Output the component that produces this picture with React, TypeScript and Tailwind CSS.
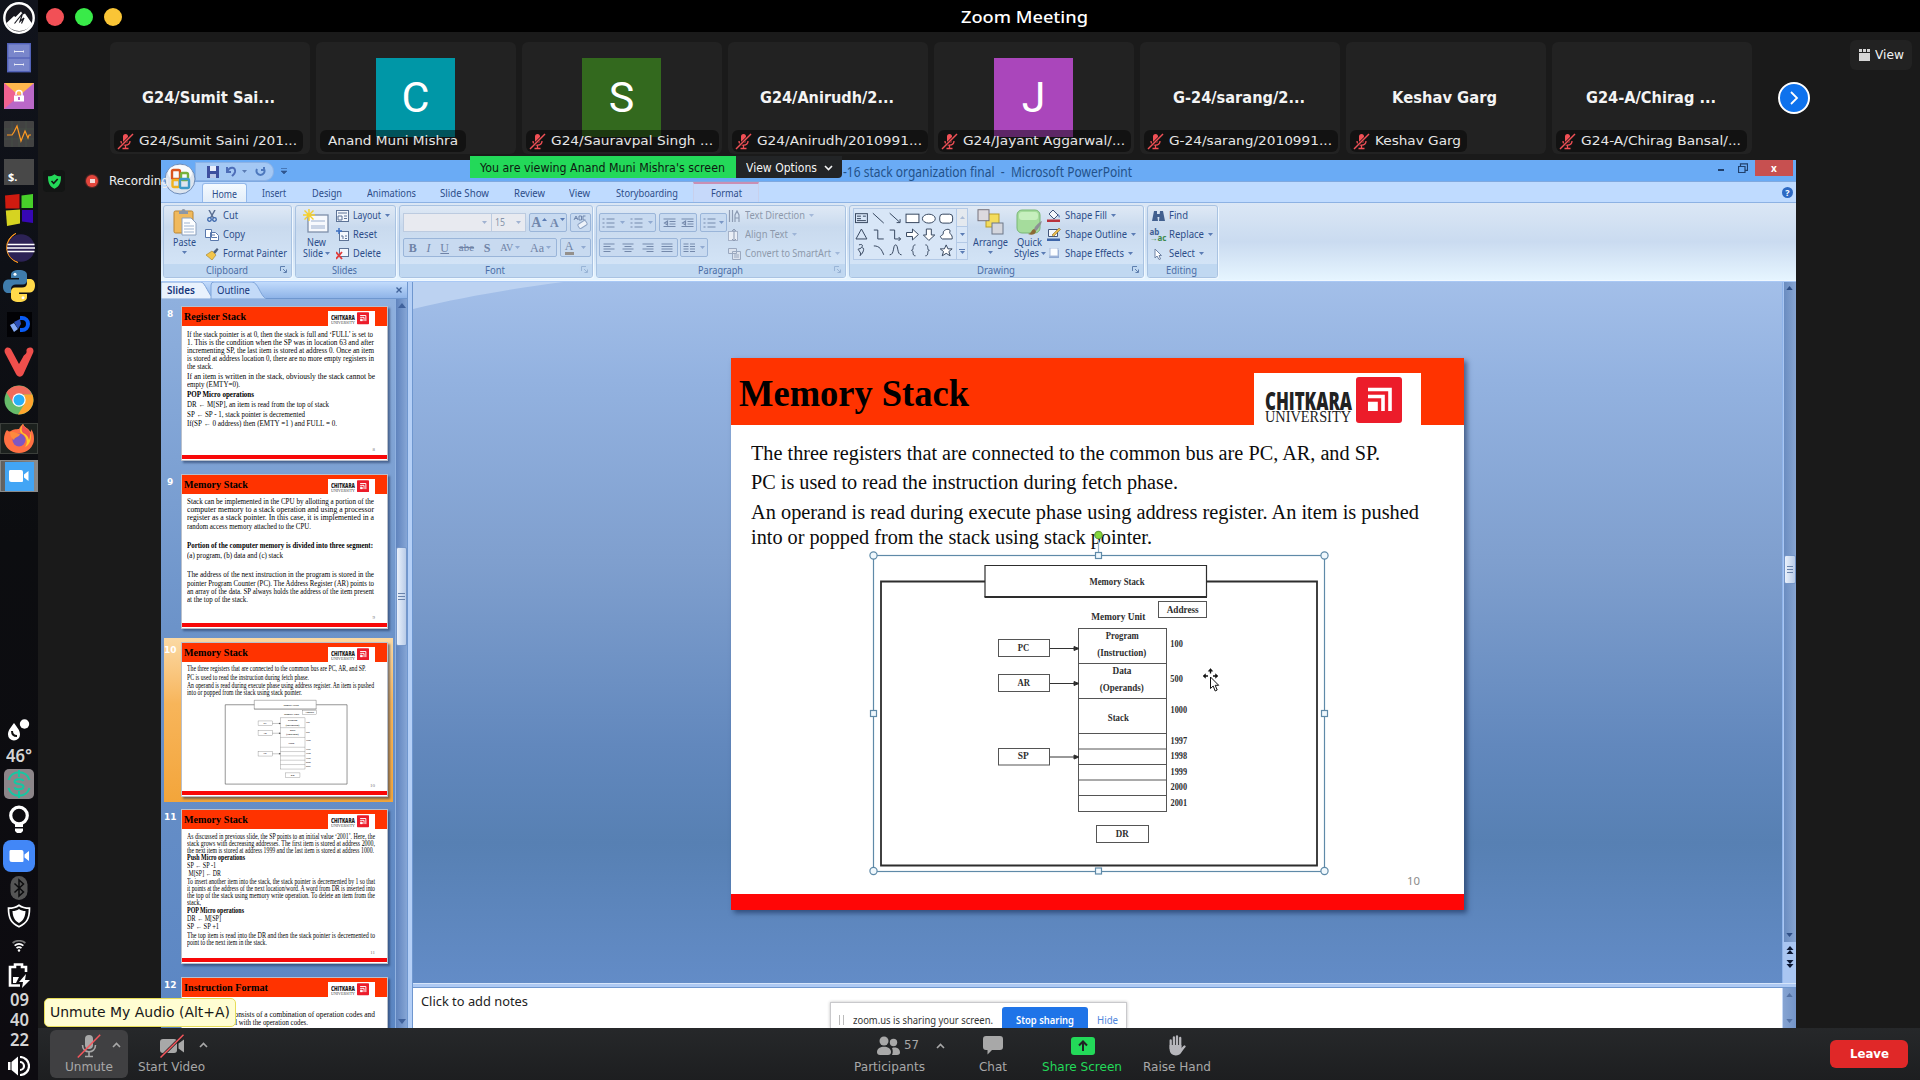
import React, { useLayoutEffect, useRef } from "react";

/* Text stretched to an exact pixel width. */
function Fit({ w, children, className = "" }: { w: number; children: React.ReactNode; className?: string }) {
  const ref = useRef<HTMLSpanElement>(null);
  useLayoutEffect(() => {
    const el = ref.current;
    if (!el) return;
    el.style.transform = "none";
    const natural = el.getBoundingClientRect().width;
    if (natural > 0) el.style.transform = `scaleX(${w / natural})`;
  }, [w, children]);
  return (
    <span className={`block shrink-0 whitespace-nowrap ${className}`} style={{ width: w }}>
      <span ref={ref} className="inline-block origin-left">{children}</span>
    </span>
  );
}

/* ---------- Dock ---------- */

function Cell({ h, children, className = "" }: { h: number; children: React.ReactNode; className?: string }) {
  return (
    <div className={`flex w-[38px] shrink-0 items-center justify-center ${className}`} style={{ height: h }}>
      {children}
    </div>
  );
}

function ZoomCam({ className }: { className: string }) {
  return (
    <svg viewBox="0 0 20 12" className={className}>
      <path d="M2 0h10a2 2 0 0 1 2 2v9a1 1 0 0 1-1 1H2.500a2.500 2.500 0 0 1-2.500-2.500V1.500A1.500 1.500 0 0 1 2 0z" fill="#fff" />
      <path d="M15 4.500 19.500 1v10L15 7.500z" fill="#fff" />
    </svg>
  );
}

function Dock() {
  return (
    <div className="flex h-[1080px] w-[38px] shrink-0 flex-col bg-linear-to-b from-[#10131c] via-[#0c0d10] via-50% to-[#0d0b10] font-['Noto_Sans',sans-serif]">
      <Cell h={39} className="pb-[3px]">
        <svg width="32" height="32" viewBox="0 0 32 32">
          <circle cx="16" cy="16" r="14.700" fill="#17171f" stroke="#fff" strokeWidth="2.400" />
          <path d="M3.500 21 11 14l1.500 1L18 9.500l2 3L22 11.500l7 10a14.500 14.500 0 0 1-25.500 0z" fill="#fff" />
          <path d="m11.500 21.500 8-10-2.500 8 4-3.500-2.500 5.500" stroke="#17171f" strokeWidth="1.200" fill="none" />
        </svg>
      </Cell>
      <Cell h={38}>
        <svg width="24" height="30" viewBox="0 0 24 30">
          <rect x=".7" y=".7" width="22.600" height="28" fill="#7986cb" stroke="#5262b8" strokeWidth="1.400" />
          <path d="M1 15h22" stroke="#4f5fb5" strokeWidth="1.200" />
          <path d="M7.500 7.500v2M16.500 7.500v2M7.500 8.500h9M7.500 20.500v2M16.500 20.500v2M7.500 21.500h9" stroke="#e8eaf6" fill="none" />
        </svg>
      </Cell>
      <Cell h={38}>
        <svg width="30" height="26" viewBox="0 0 30 26">
          <rect width="30" height="26" fill="#ba68c8" />
          <path d="M0 0h30L15 13z" fill="#ffb74d" />
          <path d="M0 0v26l15-13z" fill="#f06292" />
          <rect x="10" y="12.500" width="10" height="6" fill="#fff" />
          <path d="M12 12v-1.500a3 3 0 0 1 6 0V13" stroke="#fff" strokeWidth="1.500" fill="none" />
          <rect x="14" y="14" width="2" height="3" fill="#ba68c8" />
        </svg>
      </Cell>
      <Cell h={38}>
        <svg width="30" height="26" viewBox="0 0 30 26">
          <rect width="30" height="26" rx="1" fill="#424242" />
          <path d="M8 0v26M15 0v26M22 0v26M0 8h30M0 18h30" stroke="#4b5a4b" strokeWidth=".5" />
          <path d="M3 14h5l2-3 3-6 4 15 4-10 3 7 1-3h2" stroke="#ff9a22" strokeWidth="1.200" fill="none" />
        </svg>
      </Cell>
      <Cell h={38}>
        <div className="flex h-[26px] w-[30px] items-end bg-[#484848] pl-[4px] font-['Noto_Sans'] text-[11px] leading-[17px] font-bold text-white">$.</div>
      </Cell>
      <Cell h={38}>
        <svg width="29" height="32" viewBox="0 0 29 32">
          <path d="M0 1.500 14.500 0v14.500H.5z" fill="#cf1b10" />
          <path d="M16.500 1.500 28 0v14H16.500z" fill="#47cf2a" />
          <path d="M.8 16.500 15 15.500v14L2 32z" fill="#d6d321" />
          <path d="M17 16h11v13l-11-1.500z" fill="#3607b4" />
        </svg>
      </Cell>
      <Cell h={38}>
        <svg width="32" height="30" viewBox="0 0 32 30">
          <path d="M13 .3a15.500 15.500 0 0 0 2 29.200A16 16 0 0 1 13 .3z" fill="#f7941e" stroke="#f7941e" />
          <circle cx="18" cy="15" r="13.800" fill="#2c2255" />
          <path d="M4.500 11.500h27M4 15h28M4.500 18.500h27" stroke="#fff" strokeWidth="1.600" />
        </svg>
      </Cell>
      <Cell h={38}>
        <svg width="32" height="32" viewBox="0 0 32 32">
          <path d="M16 0c-5 0-8 1.500-8 5v3h8v1.500H5c-3 0-5 3-5 7s2 6.500 5 6.500h3v-4c0-3 2-4.500 5-4.500h7c2.500 0 4-1.800 4-4V5c0-3.500-3-5-8-5z" fill="#3f7cac" />
          <path d="M16 32c5 0 8-1.500 8-5v-3h-8v-1.500h11c3 0 5-3 5-7S30 9 27 9h-3v4c0 3-2 4.500-5 4.500h-7c-2.500 0-4 1.800-4 4V27c0 3.500 3 5 8 5z" fill="#ffd94a" />
          <circle cx="12" cy="4.300" r="1.500" fill="#fff" />
          <circle cx="20" cy="27.700" r="1.500" fill="#fff" />
        </svg>
      </Cell>
      <Cell h={38}>
        <svg width="25" height="25" viewBox="0 0 25 25">
          <rect width="25" height="25" fill="#020205" />
          <path d="M13 4h2a8 8 0 0 1 0 16h-2v-4h2a4 4 0 0 0 0-8h-2z" fill="#0a5cf5" />
          <path d="m3 13 4-2 4 6-4 3z" fill="#84a9f5" />
          <path d="m7 10 6-3 1 5-3 5z" fill="#2b4fb8" />
        </svg>
      </Cell>
      <Cell h={38}>
        <svg width="30" height="30" viewBox="0 0 30 30">
          <path d="M.8 2.500C2-.5 6 0 7.200 2.500L15 17l4-7c1.500-3 4-3 3.500-6C22 1 25 0 27 .5c2.500.7 3 3.500 2 5.500L19.500 27c-1.800 3.500-5.500 3.500-7.500 0L1 6C.5 5 .4 3.500.8 2.500z" fill="#ef4f4c" />
        </svg>
      </Cell>
      <Cell h={38}>
        <svg width="30" height="30" viewBox="0 0 30 30">
          <circle cx="15" cy="15" r="14.500" fill="#66bb6a" />
          <path d="M2.500 7.500A14.500 14.500 0 0 1 28 9.500H15L9 18z" fill="#ef6b5c" />
          <path d="M28.300 9.500A14.500 14.500 0 0 1 14 29.500L21 18l-1-8.500z" fill="#ffa52e" />
          <circle cx="15" cy="15" r="6.700" fill="#fff" />
          <circle cx="15" cy="15" r="5.500" fill="#29b0f6" />
        </svg>
      </Cell>
      <Cell h={38}>
        <div className="flex h-[31px] w-[38px] items-center justify-center border border-[#3b3f3b] bg-[#1c211e]">
          <svg width="30" height="29" viewBox="0 0 30 29">
            <path d="M3 6c1 1 2 1.500 3 1.500C9 5 15 5 15 5c2-4 3-4 4-5 1 4 6 4 7 8 2-1 1-3 1-3 3 4 3 8 3 10a15 14 0 0 1-30 0c0-3 1-7 3-9z" fill="#ff7043" />
            <path d="M19 0c1 4 6 4 7 9 2 5 0 12-5 14 4-5 1-12-4-14-2-3 0-6 2-9z" fill="#ffca28" />
            <path d="M19 0c1 4 6 4 7 9 0 3 0 5-1 7-1-4-3-6-6-7-2-2-2-5 0-9z" fill="#ef5350" />
            <circle cx="15" cy="16" r="6.500" fill="#7e57c2" />
            <path d="M6 8c4-1 6 2 10 2-1 4-5 2-6 6-3-2-4-5-4-8z" fill="#ff8a3c" />
          </svg>
        </div>
      </Cell>
      <Cell h={38}>
        <div className="flex h-[32px] w-[38px] items-center justify-center border border-[#8a8a8a] bg-linear-to-r from-[#606060] to-[#8a8a8a]">
          <div className="flex h-[29px] w-[29px] shrink-0 items-center justify-center bg-[#42a5f5]"><ZoomCam className="h-[12px] w-[20px]" /></div>
        </div>
      </Cell>
      <div className="grow" />
      <Cell h={29}>
        <svg width="24" height="22" viewBox="0 0 24 22">
          <path d="M7 4c3 4.500 6 7 6 11.500a6 6 0 0 1-12 0C1 11 4 8.500 7 4z" fill="#fff" />
          <path d="M5 12c0 3 2 5 5 5" stroke="#111" strokeWidth="2" fill="none" />
          <circle cx="17.500" cy="5" r="4.700" fill="#fff" />
        </svg>
      </Cell>
      <Cell h={23}><Fit w={26} className="text-[17px] leading-[23px] font-semibold text-[#d5d5d5]">46°</Fit></Cell>
      <Cell h={32} className="pt-[2px]">
        <svg width="30" height="30" viewBox="0 0 30 30">
          <rect width="30" height="30" rx="5" fill="#8c8589" />
          <g fill="none" stroke="#14c8a2" strokeWidth="2">
            <path d="M4.500 11a11 11 0 0 1 21 0M4.500 19a11 11 0 0 0 21 0M15 1v7M15 22v7" />
            <path d="M19.500 12c-1-2.500-9-2.500-9 .5 0 3.500 9 1.500 9 5s-8 3.500-9 .8" />
          </g>
        </svg>
      </Cell>
      <Cell h={40} className="pt-[2px]">
        <svg width="22" height="30" viewBox="0 0 22 30">
          <circle cx="11" cy="10.500" r="8.300" fill="none" stroke="#fff" strokeWidth="3.200" />
          <path d="M7 18h8v4H7zM7 23.500h8v2.500l-2 2H9l-2-2z" fill="#fff" />
        </svg>
      </Cell>
      <Cell h={32} className="pt-[1px]"><div className="flex h-[32px] w-[32px] items-center justify-center rounded-[8px] bg-[#4287f7]"><ZoomCam className="h-[12px] w-[21px]" /></div></Cell>
      <Cell h={32} className="pt-[2px]">
        <svg width="18" height="24" viewBox="0 0 18 24">
          <rect x=".5" width="17" height="24" rx="8.500" fill="#555" />
          <path d="m4.500 7.500 9 8.500-4.500 4V4l4.500 4-9 8.500" fill="none" stroke="#0c0c0e" strokeWidth="1.500" />
        </svg>
      </Cell>
      <Cell h={26}>
        <svg width="24" height="24" viewBox="0 0 24 24">
          <path d="M12 1.200c3 2.200 6.500 3 10.500 3 0 10-2.500 15-10.500 18.500C4 19 1.500 14 1.500 4.200c4 0 7.500-.8 10.500-3z" fill="#0c0c0e" stroke="#fff" strokeWidth="1.700" />
          <path d="M12 5c2 1.500 4 2 6.500 2-.3 6-2 9.500-6.500 12-4.500-2.500-6.200-6-6.500-12C8 7 10 6.500 12 5z" fill="#fff" />
        </svg>
      </Cell>
      <Cell h={32} className="pt-[2px]">
        <svg width="14" height="12" viewBox="0 0 14 12" fill="none" strokeWidth="1.700">
          <path d="M.6 3a10 10 0 0 1 12.800 0" stroke="#777" />
          <path d="M2.600 5.600a7 7 0 0 1 8.800 0M4.500 8.200a4 4 0 0 1 5 0" stroke="#fff" />
          <circle cx="7" cy="10.500" r="1.200" fill="#fff" />
        </svg>
      </Cell>
      <Cell h={29}>
        <svg width="22" height="25" viewBox="0 0 22 25">
          <path d="M18 9V4h-4V1.500H7V4H2v18.500h10" fill="none" stroke="#fff" strokeWidth="2.600" />
          <path d="M5 14h6l-3 6H5z" fill="#fff" />
          <path d="m18 11-7 8h4l-1 6 8-8h-5z" fill="#fff" />
        </svg>
      </Cell>
      {["09", "40", "22"].map((t) => (
        <Cell key={t} h={20}><Fit w={19} className="text-[17px] leading-[20px] font-semibold text-[#d5d5d5]">{t}</Fit></Cell>
      ))}
      <Cell h={30} className="pt-[2px]">
        <svg width="22" height="20" viewBox="0 0 22 20">
          <path d="M0 6h2.500v8H0zM3.500 6 10 .5v19L3.500 14z" fill="#fff" />
          <path d="M12 1a9 9 0 0 1 0 18M12 6a4 4 0 0 1 0 8" fill="none" stroke="#fff" strokeWidth="2.200" />
        </svg>
      </Cell>
    </div>
  );
}

/* ---------- Participant strip ---------- */

function RedMic() {
  return (
    <svg width="17" height="17" viewBox="0 0 17 17" className="shrink-0">
      <rect x="6" y="1" width="5" height="9" rx="2.500" fill="#f25056" />
      <path d="M4 8c0 5.500 9 5.500 9 0M8.500 12.500v3M5.500 15.500h6" stroke="#f25056" strokeWidth="1.300" fill="none" />
      <path d="M1 16 16 1" stroke="#141414" strokeWidth="3" />
      <path d="M1 16 16 1" stroke="#f25056" strokeWidth="1.500" />
    </svg>
  );
}

type Person = { label: string; lw: number; name?: string; nw?: number; letter?: string; color?: string; unmuted?: boolean };
const people: Person[] = [
  { label: "G24/Sumit Saini /201...", lw: 158, name: "G24/Sumit Sai...", nw: 133 },
  { label: "Anand Muni Mishra", lw: 130, letter: "C", color: "bg-[#0097a7]", unmuted: true },
  { label: "G24/Sauravpal Singh ...", lw: 162, letter: "S", color: "bg-[#33691e]" },
  { label: "G24/Anirudh/2010991...", lw: 165, name: "G24/Anirudh/2...", nw: 134 },
  { label: "G24/Jayant Aggarwal/...", lw: 162, letter: "J", color: "bg-[#aa46bb]" },
  { label: "G-24/sarang/2010991...", lw: 163, name: "G-24/sarang/2...", nw: 132 },
  { label: "Keshav Garg", lw: 86, name: "Keshav Garg", nw: 105 },
  { label: "G24-A/Chirag Bansal/...", lw: 160, name: "G24-A/Chirag ...", nw: 130 },
];

function Strip() {
  return (
    <div className="flex h-[128px] shrink-0 pt-[10px] pl-[72px] font-['DejaVu_Sans',sans-serif]">
      <div className="flex gap-[6px]">
        {people.map((p) => (
          <div key={p.label} className="relative flex h-[112px] w-[200px] items-center justify-center overflow-hidden rounded-[6px] bg-[#222222] pr-[3px] pb-px">
            {p.letter ? (
              <div className={`mb-px ml-[2px] flex h-[79px] w-[79px] items-center justify-center pt-[1px] font-['Roboto',sans-serif] text-[43px] text-white ${p.color}`}>{p.letter}</div>
            ) : (
              <Fit w={p.nw!} className="text-[15px] leading-[20px] font-bold text-[#f4f4f4]">{p.name}</Fit>
            )}
            <div className={`absolute bottom-[2px] left-[4px] flex h-[22px] items-center rounded-[6px] bg-black/45 ${p.unmuted ? "px-[8px]" : "gap-[5px] pr-[6px] pl-[3px]"}`}>
              {!p.unmuted && <RedMic />}
              <Fit w={p.lw} className="text-[13px] leading-[18px] text-[#e6e6e6]">{p.label}</Fit>
            </div>
          </div>
        ))}
      </div>
      <div className="mt-[40px] ml-[26px] flex h-[32px] w-[32px] items-center justify-center rounded-full border-[2.5px] border-white bg-[#0e72ed]">
        <svg width="10" height="14" viewBox="0 0 10 14"><path d="m2 1 6 6-6 6" fill="none" stroke="#fff" strokeWidth="1.800" /></svg>
      </div>
      <div className="-mt-[2px] ml-[40px] flex h-[30px] w-[62px] items-center justify-center gap-[5px] rounded-[6px] bg-[#222222]">
        <svg width="11" height="12" viewBox="0 0 11 12" fill="#d5d5d5"><path d="M0 0h3v3H0zM4 0h3v3H4zM8 0h3v3H8zM0 4h11v8H0z" /></svg>
        <Fit w={29} className="text-[12.500px] leading-[18px] text-[#f2f2f2]">View</Fit>
      </div>
    </div>
  );
}

/* ---------- Ribbon ---------- */

function Caret({ className = "" }: { className?: string }) {
  return <svg width="5" height="3" viewBox="0 0 5 3" className={`shrink-0 ${className}`}><path d="M0 0h5L2.500 3z" fill="#5b7cb4" /></svg>;
}

function Launcher({ faded = false }: { faded?: boolean }) {
  return (
    <svg width="7" height="7" viewBox="0 0 7 7" className={`absolute right-[4px] bottom-[4px] ${faded ? "opacity-40" : ""}`}>
      <path d="M.5 5V.5H5M3 3l3 3M6.500 3.500v3h-3" fill="none" stroke="#5e7fae" />
    </svg>
  );
}

function Group({ w, label, lw, children, launcher }: { w: number; label: string; lw: number; children: React.ReactNode; launcher?: "on" | "off" }) {
  return (
    <div className="relative flex h-[73px] shrink-0 flex-col overflow-hidden rounded-[3px] border border-[#a9c3e2] bg-linear-to-b from-[#dfe9f5] via-[#c9daee] via-30% to-[#d6e7f9] shadow-[1px_1px_0_#f0f8ff]" style={{ width: w }}>
      <div className="flex h-[58px] shrink-0">{children}</div>
      <div className="flex h-[14px] items-center justify-center bg-[#c0d8f1] pr-[2px]">
        <Fit w={lw} className="text-[10.500px] leading-[13px] text-[#4a6da6]">{label}</Fit>
      </div>
      {launcher && <Launcher faded={launcher === "off"} />}
    </div>
  );
}

function Cmd({ icon, w, text, caret, dim }: { icon: React.ReactNode; w: number; text: string; caret?: boolean; dim?: boolean }) {
  return (
    <div className="flex h-[19px] items-center">
      <div className="mr-[4px] flex w-[14px] shrink-0 justify-center">{icon}</div>
      <Fit w={w} className={`text-[10.500px] leading-[15px] ${dim ? "text-[#8d99ab]" : "text-[#2c4d89]"}`}>{text}</Fit>
      {caret && <Caret className={`ml-[4px] ${dim ? "opacity-40" : ""}`} />}
    </div>
  );
}

function Big({ icon, lines, caretBelow }: { icon: React.ReactNode; lines: [string, number][]; caretBelow?: boolean }) {
  return (
    <div className="flex flex-col items-center pt-[2px]">
      <div className="flex h-[28px] items-center">{icon}</div>
      {lines.map(([t, w], i) => (
        <div key={t} className="mt-px flex h-[10px] items-center gap-[2px]">
          <Fit w={w} className="text-[10.500px] leading-[11px] text-[#2c4d89]">{t}</Fit>
          {!caretBelow && i === lines.length - 1 && <Caret />}
        </div>
      ))}
      {caretBelow && <Caret className="mt-[4px]" />}
    </div>
  );
}

const btnBox = "flex h-[19px] items-center justify-around rounded-[2px] border border-[#9ab5d9] bg-[#c8daf0]";

function Lines({ kind }: { kind: "left" | "center" | "right" | "full" | "bul" | "ind" | "col" }) {
  const d = {
    left: "M0 1h11M0 3.500h7M0 6h11M0 8.500h7",
    center: "M0 1h11M2 3.500h7M0 6h11M2 8.500h7",
    right: "M0 1h11M4 3.500h7M0 6h11M4 8.500h7",
    full: "M0 1h11M0 3.500h11M0 6h11M0 8.500h11",
    bul: "M0 1h2M4 1h8M0 5h2M4 5h8M0 9h2M4 9h8",
    ind: "M0 1h12M6 3.500h6M6 6h6M0 8.500h12M4 3v4L1 5z",
    col: "M0 1h5M6.500 1h5M0 3.500h5M6.500 3.500h5M0 6h5M6.500 6h5M0 8.500h5M6.500 8.500h5",
  }[kind];
  return <svg width="13" height="10" viewBox="0 0 12 10"><path d={d} stroke="#7489ab" strokeWidth="1.200" fill="none" /></svg>;
}

function ShapeGallery() {
  return (
    <div className="mt-[2px] ml-[3px] flex h-[52px] w-[115px] border border-[#b3c9e6] bg-[#d8e6f7]">
      <svg width="103" height="50" viewBox="1 0 103 50" fill="none" stroke="#37475f" strokeWidth="1">
        <rect x="2.500" y="4.500" width="12" height="9" /><path d="M4 7h4M4 9.500h4M10 7h3M4 11.500h9" />
        <path d="m20 4 11 10M37 4l10 9M44 13.500h3.500V10" />
        <rect x="53.500" y="5" width="13" height="8.500" fill="#fff" />
        <ellipse cx="76.500" cy="9.500" rx="6.500" ry="4.500" fill="#fff" />
        <rect x="87.500" y="5" width="13" height="9" rx="3" fill="#fff" />
        <path d="m8.500 20 5.500 10H3zM21 21h4v9h6M37 21h5v9h6M46 28l2 2-2 2" />
        <path d="M54 23.500h6V20l6 5.500-6 5.500v-3.500h-6zM74 20h5v6h3.500L76.500 31.500 71 26h3z" fill="#fff" />
        <path d="M90 30c-5-4 2-3 1-6 0-4 7-5 7-2-2 3 3 3 2 8z" fill="#fff" />
        <path d="M6 36c6-2 3 4 0 4s4 4 1 7M9 39c4-1 0 8-2 7M21 37c6 0 8 4 10 9M37 46c5 0 3-10 6-10s1 10 6 10" />
        <path d="M63 36c-4 0-1 5-4 5.500 3 .5 0 5.500 4 5.500M73 36c4 0 1 5 4 5.500-3 .5 0 5.500-4 5.500" />
        <path d="m94 36 1.800 4H100l-3.300 2.700L98 47l-4-2.500L90 47l1.300-4.300L88 40h4.200z" fill="#fff" />
      </svg>
      <div className="flex w-[11px] flex-col border-l border-[#b3c9e6]">
        <div className="flex h-[17px] items-center justify-center bg-[#e4e9ef]"><Caret className="rotate-180 opacity-40" /></div>
        <div className="flex h-[17px] items-center justify-center border-y border-[#b3c9e6]"><Caret /></div>
        <div className="flex h-[16px] flex-col items-center justify-center gap-px"><div className="h-px w-[6px] bg-[#5b7cb4]" /><Caret /></div>
      </div>
    </div>
  );
}

const tabs: [string, number, number][] = [
  ["Insert", 24, 15], ["Design", 30, 26], ["Animations", 49, 25], ["Slide Show", 49, 24], ["Review", 31, 25],
  ["View", 21, 24], ["Storyboarding", 62, 26],
];

function Ribbon() {
  return (
    <>
      {/* Title bar */}
      <div className="relative flex h-[22px] shrink-0 border-b border-[#7fa9e0] bg-[#6aabf5]">
        <div className="mt-[2px] ml-[34px] flex h-[19px] w-[79px] items-center rounded-r-[9px] border border-[#8bb2e6] bg-[#a4c8f4] pl-[11px]">
          <svg width="12" height="12" viewBox="0 0 12 12"><path d="M0 0h12v12H0z" fill="#3d4f9f" /><path d="M3 0h6v5H3z" fill="#e8eefb" /><path d="M3 8h6v4H3z" fill="#b9c6e8" /></svg>
          <svg width="11" height="11" viewBox="0 0 11 11" className="ml-[7px]"><path d="M1 1v5h4M1.500 5C4 0 10 1 9 6c-.5 2-2 3-3 4" fill="none" stroke="#4d6db8" strokeWidth="2" /></svg>
          <Caret className="ml-[5px]" />
          <svg width="11" height="11" viewBox="0 0 11 11" className="ml-[8px]"><path d="M2 3a4 4 0 1 0 7 0M9 1v3H6" fill="none" stroke="#4d78bd" strokeWidth="2" /></svg>
        </div>
        <svg width="6" height="7" viewBox="0 0 6 7" className="mt-[8px] ml-[7px]"><path d="M0 .5h6M0 3h6L3 6z" fill="#2f568f" stroke="#2f568f" strokeWidth=".6" /></svg>
        <Fit w={289} className="mt-[3px] ml-[556px] text-[13.500px] leading-[18px] text-[#23528a]">-16 stack organization final&nbsp; - &nbsp;Microsoft PowerPoint</Fit>
        <div className="ml-auto flex h-[16px] items-center pr-[3px]">
          <div className="mt-[4px] mr-[14px] h-[2px] w-[6px] bg-[#20406c]" />
          <svg width="10" height="10" viewBox="0 0 10 10" className="mr-[7px]"><path d="M.5 3.500h6.500v6H.5zM2.500 3V.8h7v6.500H7.500" fill="none" stroke="#20406c" strokeWidth="1.200" /></svg>
          <div className="flex h-[16px] w-[38px] items-center justify-center bg-[#c75050] text-[10px] leading-none font-bold text-white">x</div>
        </div>
        {/* Office button */}
        <svg width="32" height="34" viewBox="0 0 32 34" className="absolute top-[2px] left-[3px] z-10">
          <circle cx="16" cy="17" r="15" fill="#dde5ef" stroke="#6f8db8" />
          <ellipse cx="16" cy="11" rx="12" ry="8" fill="#f8fafc" />
          <g fill="none" strokeWidth="2.400">
            <rect x="8" y="8" width="8" height="9" rx="1.500" stroke="#d9541e" /><rect x="17" y="11" width="7" height="7" rx="1.500" stroke="#78b23c" />
            <rect x="8.500" y="18" width="7" height="7" rx="1.500" stroke="#f0b21e" /><rect x="16" y="17" width="9" height="9" rx="1.500" stroke="#3c9ac8" />
          </g>
        </svg>
      </div>
      {/* Tabs */}
      <div className="flex h-[20px] shrink-0 items-end bg-[#bfdbff]">
        <div className="ml-[41px] flex h-[19px] w-[45px] items-center justify-center rounded-t-[3px] border border-b-0 border-[#95b9ea] bg-linear-to-b from-[#f4faff] to-[#e2edf9]">
          <Fit w={25} className="text-[11px] leading-[15px] text-[#2c4d89]">Home</Fit>
        </div>
        {tabs.map(([t, w, ml]) => (
          <div key={t} style={{ marginLeft: ml }}><Fit w={w} className="text-[11px] leading-[19px] text-[#2c4d89]">{t}</Fit></div>
        ))}
        <div className="ml-[15px] flex h-[20px] w-[66px] items-center justify-center border-x border-t-2 border-x-[#c8d0ec] border-t-[#c98fb4] bg-[#c6d9fa]">
          <Fit w={31} className="pb-[2px] text-[11px] leading-[15px] text-[#2c4d89]">Format</Fit>
        </div>
        <div className="mr-[3px] mb-[4px] ml-auto flex h-[11px] w-[11px] items-center justify-center rounded-full bg-[#2c69c4] text-[9px] font-bold text-white">?</div>
      </div>
      {/* Groups */}
      <div className="flex h-[78px] shrink-0 gap-[3px] border-t border-[#8db2e3] bg-linear-to-b from-[#dbe7f5] via-[#cadbf0] to-[#e6f5ff] pt-[2px] pl-[2px]">
        <Group w={129} label="Clipboard" lw={42} launcher="on">
          <div className="ml-[8px] w-[25px]">
            <Big caretBelow lines={[["Paste", 23]]} icon={
              <svg width="24" height="27" viewBox="0 0 24 27"><rect x="1" y="2" width="19" height="22" rx="1.500" fill="#f0b95c" stroke="#b98432" /><path d="M6 4V2h2.500a2 2 0 0 1 4 0H15v3H6z" fill="#8d97a5" /><path d="M9 9h9l5 5v12H9z" fill="#fdfeff" stroke="#8ba0bd" /><path d="M11 14h6M11 17h10M11 20h10M11 23h10" stroke="#9fb4d0" /></svg>} />
          </div>
          <div className="ml-[8px]">
            <Cmd w={15} text="Cut" icon={<svg width="10" height="12" viewBox="0 0 10 12"><path d="M2 0 6.500 8M8 0 3.500 8" stroke="#5b6f92" strokeWidth="1.500" /><circle cx="2.500" cy="9.500" r="1.800" fill="none" stroke="#3b66ac" strokeWidth="1.300" /><circle cx="7.500" cy="9.500" r="1.800" fill="none" stroke="#3b66ac" strokeWidth="1.300" /></svg>} />
            <Cmd w={22} text="Copy" icon={<svg width="14" height="12" viewBox="0 0 14 12"><path d="M.5.500h6v8h-6zM5.500 3.500h5l3 3v5h-8z" fill="#fff" stroke="#5877ab" /><path d="M7 6h3M7 8.500h5" stroke="#5877ab" /></svg>} />
            <Cmd w={64} text="Format Painter" icon={<svg width="14" height="12" viewBox="0 0 14 12"><path d="m8 4 4-4 1.500 1.500L10 6z" fill="#4d5f7d" /><path d="m1 7 6-4 4 4-4 5z" fill="#f2c54a" stroke="#a98a3a" strokeWidth=".7" /></svg>} />
          </div>
        </Group>
        <Group w={101} label="Slides" lw={25}>
          <div className="ml-[5px] w-[30px]">
            <Big lines={[["New", 19], ["Slide", 20]]} icon={
              <svg width="27" height="26" viewBox="0 0 27 26"><rect x="5" y="6" width="20" height="17" fill="#f7f9fd" stroke="#7e8fa9" strokeWidth="1.300" /><path d="M8 11h14v2H8zM8 16h14v4H8z" fill="#c9d4e6" /><path d="M6 0v12M0 6h12M1.500 1.500l9 9M10.500 1.500l-9 9" stroke="#f5cf2c" strokeWidth="1.400" /></svg>} />
          </div>
          <div className="ml-[4px]">
            <Cmd w={28} text="Layout" caret icon={<svg width="13" height="12" viewBox="0 0 13 12"><rect x=".5" y=".5" width="12" height="11" fill="#f3f7fd" stroke="#5d7396" /><path d="M2 3h9M2 6h4v4H2zM8 6h3M8 8.500h3" stroke="#5d7396" fill="none" /></svg>} />
            <Cmd w={24} text="Reset" icon={<svg width="13" height="13" viewBox="0 0 13 13"><rect x="3.500" y="3.500" width="9" height="9" fill="#f3f7fd" stroke="#5d7396" /><path d="M5 8h2v3M9 8h2M9 10.500h2" stroke="#5d7396" fill="none" /><path d="M0 3h6M3 0v6" stroke="#3d6fc1" strokeWidth="1.500" /></svg>} />
            <Cmd w={28} text="Delete" icon={<svg width="13" height="12" viewBox="0 0 13 12"><rect x="3.500" y=".5" width="9" height="8" fill="#f3f7fd" stroke="#5d7396" /><path d="m0 4 6 7M6 4l-6 7" stroke="#e03a3a" strokeWidth="1.800" /></svg>} />
          </div>
        </Group>
        <Group w={194} label="Font" lw={20} launcher="off">
          <div className="flex flex-col gap-[6px] pt-[7px] pl-[3px]">
            <div className="flex h-[19px] items-center">
              <div className="flex h-[19px] w-[89px] items-center justify-end border border-[#bccbe0] bg-[#e8eaf0] pr-[4px]"><Caret className="opacity-50" /></div>
              <div className="flex h-[19px] w-[34px] items-center justify-between border border-l-0 border-[#bccbe0] bg-[#e8eaf0] pr-[4px] pl-[3px]"><Fit w={10} className="text-[10.500px] text-[#8795aa]">15</Fit><Caret className="opacity-50" /></div>
              <div className={`ml-[3px] w-[38px] font-['Liberation_Serif'] font-bold text-[#7187ac] ${btnBox}`}>
                <span className="flex items-start gap-px text-[14px] leading-[16px]">A<Caret className="mt-[3px] rotate-180" /></span>
                <span className="flex items-start gap-px text-[12px] leading-[16px]">A<Caret className="mt-[3px]" /></span>
              </div>
              <div className={`ml-[3px] w-[21px] ${btnBox}`}><svg width="15" height="15" viewBox="0 0 15 15"><path d="M1 5 3 1l2 4M1.800 3.500h2.500M6 1h2.500v4H6zM12.500 1H10v4h2.500" stroke="#7187ac" fill="none" /><rect x="5" y="7" width="9" height="5" rx="1.500" transform="rotate(-32 9.500 9.500)" fill="#eef3fa" stroke="#8fa4c4" /></svg></div>
            </div>
            <div className="flex">
              <div className={`w-[154px] font-['Liberation_Serif'] text-[12px] text-[#6f83a6] ${btnBox}`}>
                <span className="font-bold">B</span><span className="italic">I</span><span className="underline">U</span><span className="text-[11px] line-through">abe</span><span className="font-bold">S</span>
                <span className="flex items-center gap-[2px] text-[10px]">AV<Caret className="opacity-50" /></span><span className="flex items-center gap-[2px]">Aa<Caret className="opacity-50" /></span>
              </div>
              <div className={`ml-[3px] w-[31px] ${btnBox}`}><span className="border-b-[3px] border-[#94908c] font-['Liberation_Serif'] text-[12px] leading-[11px] text-[#6f83a6]">A</span><Caret className="opacity-50" /></div>
            </div>
          </div>
        </Group>
        <Group w={250} label="Paragraph" lw={45} launcher="off">
          <div className="flex w-[130px] flex-col gap-[6px] pt-[7px] pl-[2px]">
            <div className="flex gap-[3px]">
              <div className={`w-[57px] ${btnBox}`}><Lines kind="bul" /><Caret className="opacity-50" /><Lines kind="bul" /><Caret className="opacity-50" /></div>
              <div className={`w-[38px] ${btnBox}`}><Lines kind="ind" /><Lines kind="ind" /></div>
              <div className={`w-[27px] ${btnBox}`}><Lines kind="bul" /><Caret className="opacity-70" /></div>
            </div>
            <div className="flex gap-[2px]">
              <div className={`w-[79px] ${btnBox}`}><Lines kind="left" /><Lines kind="center" /><Lines kind="right" /><Lines kind="full" /></div>
              <div className={`w-[28px] ${btnBox}`}><Lines kind="col" /><Caret className="opacity-50" /></div>
            </div>
          </div>
          <div>
            <Cmd dim caret w={60} text="Text Direction" icon={<svg width="12" height="12" viewBox="0 0 12 12"><path d="M1.500 0v12M4.500 0v12M7 12V5l2-4 2 4v7M7 8h4" stroke="#8d9bb3" fill="none" strokeWidth="1.200" /></svg>} />
            <Cmd dim caret w={43} text="Align Text" icon={<svg width="12" height="12" viewBox="0 0 12 12"><rect x=".5" y="2.500" width="9" height="9" fill="#e9eef6" stroke="#a5b2c8" /><path d="M6 0v12M4 2l2-2 2 2M4 10l2 2 2-2" stroke="#8d9bb3" fill="none" /></svg>} />
            <Cmd dim caret w={86} text="Convert to SmartArt" icon={<svg width="13" height="12" viewBox="0 0 13 12"><path d="M.5.500h8v5h-8zM4.500 3.500h8v8h-8z" fill="#dce3ee" stroke="#9aa8bf" /><path d="M6 7h5M6 9h5" stroke="#9aa8bf" /></svg>} />
          </div>
        </Group>
        <Group w={295} label="Drawing" lw={38} launcher="on">
          <ShapeGallery />
          <div className="ml-[4px] w-[37px]">
            <Big caretBelow lines={[["Arrange", 35]]} icon={<svg width="27" height="26" viewBox="0 0 27 26"><rect x="9" y="5" width="13" height="13" fill="#f3dc5c" stroke="#b99d2a" /><rect x="1" y=".7" width="11" height="11" fill="#dcd9de" stroke="#77737c" /><rect x="15" y="14" width="11" height="11" fill="#d4d6dd" stroke="#6d7787" /></svg>} />
          </div>
          <div className="ml-[3px] w-[35px]">
            <Big lines={[["Quick", 25], ["Styles", 25]]} icon={<svg width="27" height="27" viewBox="0 0 27 27"><rect x="1" y="1" width="23" height="23" rx="5" fill="#a5dc9c" stroke="#79b775" /><rect x="3" y="3" width="19" height="8" rx="3" fill="#c6efbe" /><path d="M26 12c-4 2-8 6-8 9l2 1c2-2 5-6 6-10z" fill="#8d8f94" /><path d="M18 20c-3 1-2 4-6 5 4 2 8 0 8-3z" fill="#8c6a35" /></svg>} />
          </div>
          <div>
            <Cmd caret w={42} text="Shape Fill" icon={<svg width="14" height="13" viewBox="0 0 14 13"><path d="m2 5 4-4 5 5-4 4z" fill="#f4f7fc" stroke="#42557a" /><path d="M11 5c2 1 2 3 1 4z" fill="#3b66ac" /><path d="M0 10.500h13V13H0z" fill="#b8323d" /></svg>} />
            <Cmd caret w={62} text="Shape Outline" icon={<svg width="14" height="13" viewBox="0 0 14 13"><path d="M1.500 1.500h9v7h-9z" fill="#f4f7fc" stroke="#42557a" /><path d="m5 7 7-7 1.500 1.500-7 7z" fill="#e6b94d" stroke="#7a5d1c" strokeWidth=".5" /><path d="M0 10.500h13V13H0z" fill="#3c64a8" /></svg>} />
            <Cmd caret w={59} text="Shape Effects" icon={<svg width="14" height="12" viewBox="0 0 14 12"><path d="M4 2h8v8H2z" fill="#8fa9d2" /><path d="M3 0h8v8H3z" fill="#fbfdff" stroke="#a9bcdb" /></svg>} />
          </div>
        </Group>
        <Group w={71} label="Editing" lw={31}>
          <div className="ml-[3px]">
            <Cmd w={19} text="Find" icon={<svg width="13" height="12" viewBox="0 0 13 12"><path d="M2 1h3v3l1 7H0zM8 1h3l2 10H7zM5 4h3v3H5z" fill="#42608f" /></svg>} />
            <Cmd caret w={35} text="Replace" icon={<span className="text-[8px] leading-[6px] font-bold text-[#3f5f93]">ab<br /><span className="text-[#3c8a4c]">→ac</span></span>} />
            <Cmd caret w={26} text="Select" icon={<svg width="8" height="12" viewBox="0 0 8 12"><path d="M1 1v9l2-2 2 3.500L6.500 11 5 7.500h2.500z" fill="#fff" stroke="#7084a5" /></svg>} />
          </div>
        </Group>
      </div>
    </>
  );
}

/* ---------- Slides ---------- */

function Diagram({ className }: { className: string }) {
  const t = (s: string, x: number, y: number, w: number) => (
    <text key={s + y} x={x - w / 2} y={y + 3.200} textLength={w} lengthAdjust="spacingAndGlyphs">{s}</text>
  );
  const arrow = (y: number) => <path key={y} d={`M1050 ${y}h26M1074 ${y - 2}l5 2-5 2z`} fill="#222" stroke="#333" />;
  return (
    <svg viewBox="873 555 451 316" className={className}>
      <g fill="none" stroke="#2d2d2d">
        <path d="M985 581.500H881v284h436v-284h-110" strokeWidth="1.800" />
        <path d="M985 597V565.500h221.500V597" strokeWidth="1.200" />
        <path d="M984.500 597h222.500" strokeWidth="2" />
        <g strokeWidth="1" stroke="#555">
          <rect x="1158.500" y="601.500" width="48" height="16" />
          <rect x="1078.500" y="628.500" width="88" height="183" />
          <path d="M1078.500 663.500h88M1078.500 698.500h88M1078.500 733.500h88M1078.500 749h88M1078.500 764.500h88M1078.500 780h88M1078.500 795.500h88" />
          <rect x="998.500" y="639.500" width="51" height="17" /><rect x="998.500" y="674.500" width="51" height="17" /><rect x="998.500" y="748.500" width="51" height="16.500" />
          <rect x="1096.500" y="825.500" width="52" height="17" />
        </g>
      </g>
      {[648.5, 683.5, 757].map(arrow)}
      <g fontFamily="Liberation Serif, serif" fontWeight="bold" fontSize="9.500" fill="#2e2e2e">
        {t("Memory Stack", 1117, 581.5, 55)}
        {t("Address", 1182.7, 609.5, 32)}
        {t("Memory Unit", 1118.3, 616.5, 54)}
        {t("Program", 1122.3, 636, 33)}
        {t("(Instruction)", 1121.7, 652.7, 49)}
        {t("Data", 1122, 671, 19)}
        {t("(Operands)", 1121.7, 687.5, 44)}
        {t("Stack", 1118.3, 717.3, 21)}
        {t("PC", 1023.5, 647.5, 11.500)}
        {t("AR", 1023.7, 682.5, 12.500)}
        {t("SP", 1023.3, 756, 11)}
        {t("DR", 1122.3, 833.5, 13)}
        {t("100", 1176.6, 643.5, 12.500)}
        {t("500", 1176.6, 678.3, 12.500)}
        {t("1000", 1178.8, 709.5, 16.500)}
        {t("1997", 1178.8, 740.5, 16.500)}
        {t("1998", 1178.8, 756, 16.500)}
        {t("1999", 1178.8, 771.3, 16.500)}
        {t("2000", 1178.8, 787, 16.500)}
        {t("2001", 1178.8, 802.5, 16.500)}
      </g>
    </svg>
  );
}

function LogoMark({ className }: { className: string }) {
  return (
    <svg viewBox="0 0 46 46" className={className}>
      <rect width="46" height="46" rx="3" fill="#ec1c2a" />
      <path d="M12 12.500h22V34M12 19.500h15V34M12 26.500h8V34" fill="none" stroke="#fff" strokeWidth="3.600" />
      <path d="M12 27h8v7h-8z" fill="#fff" />
    </svg>
  );
}

type L = [h: number, w: number, text: string, bold?: boolean];

function Thumb({ n, title, tw, top, lines, page, selected, diagram }: { n: number; title: string; tw: number; top: number; lines: L[]; page?: string; selected?: boolean; diagram?: boolean }) {
  return (
    <div className={`ml-[3px] flex h-[167.750px] w-[229px] shrink-0 ${selected ? "bg-linear-to-b from-[#fbd9a3] via-[#f7b55a] via-40% to-[#f3a53a] bg-[length:100%_164px] bg-no-repeat" : ""}`}>
      <div className="w-[17px] shrink-0 pt-[5px] font-['DejaVu_Sans',sans-serif] text-[9px] leading-[15px] font-bold text-white">
        <span className={n < 10 ? "ml-[3px]" : ""}>{n}</span>
      </div>
      <div className="mt-[4px] flex h-[155px] w-[207px] flex-col overflow-hidden border border-[#b9c0cc] bg-white shadow-[2px_2px_2px_rgba(30,50,90,.55)]">
        <div className="flex h-[19px] shrink-0 justify-between bg-[#ff3300] pr-[12px] pl-[2px]">
          <Fit w={tw} className="font-['Liberation_Serif',serif] text-[10.500px] leading-[20px] font-bold text-black">{title}</Fit>
          <div className="mt-[4px] flex h-[15px] w-[47px] items-start bg-white pl-[3px]">
            <div className="mt-[3px] mr-[2px]">
              <Fit w={24} className="h-[6px] font-['Open_Sans',sans-serif] text-[7px] leading-[7px] font-extrabold text-[#222]">CHITKARA</Fit>
              <Fit w={24} className="h-[5px] font-['Liberation_Serif',serif] text-[5px] leading-[6px] text-[#444]">UNIVERSITY</Fit>
            </div>
            <LogoMark className="mt-px h-[12.500px] w-[12px]" />
          </div>
        </div>
        <div className="relative grow font-['Liberation_Serif',serif] text-[7.200px] text-black">
          <div className="pl-[5px]" style={{ paddingTop: top }}>
            {lines.map(([h, w, text, bold]) => (
              <div key={text} className="flex items-end" style={{ height: h }}>
                <Fit w={w} className={`h-[8px] leading-[8px] ${bold ? "font-bold" : ""}`}>{text}</Fit>
              </div>
            ))}
          </div>
          {diagram && <Diagram className="absolute top-[35px] left-[41px] h-[89px] w-[126px]" />}
          <span className="absolute right-[12px] bottom-[2px] text-[5px] leading-[6px] text-[#777]">{page}</span>
        </div>
        <div className="h-[4px] shrink-0 bg-[#f80808]" />
        <div className="h-px shrink-0 bg-white" />
      </div>
    </div>
  );
}

function SlidePane() {
  return (
    <div className="flex h-[746px] w-[246px] shrink-0 flex-col overflow-hidden">
      <div className="flex h-[17px] shrink-0 items-center border-b border-[#6f97cf] bg-linear-to-b from-[#c2dbfb] to-[#8fb4e8]">
        <svg width="108" height="17" viewBox="0 0 108 17" className="absolute">
          <path d="M0 0h40c4 0 8 14 13 17H0z" fill="#e9f2fd" stroke="#7ea4d9" />
          <path d="M50 17V3q0-3 3-3h38c6 0 8 13 14 17z" fill="#c3daf8" stroke="#7ea4d9" />
        </svg>
        <Fit w={28} className="relative ml-[6px] pb-px text-[11px] leading-[15px] font-semibold text-[#15357a]">Slides</Fit>
        <Fit w={33} className="relative ml-[22px] pb-px text-[11px] leading-[15px] text-[#15357a]">Outline</Fit>
        <svg width="6" height="6" viewBox="0 0 6 6" className="mr-[5px] ml-auto"><path d="m.5.500 5 5M5.500.500l-5 5" stroke="#41639a" strokeWidth="1.400" /></svg>
      </div>
      <div className="flex min-h-0 grow">
        <div className="flex w-[234px] flex-col overflow-hidden bg-linear-to-b from-[#8fb0de] via-[#6c93c9] via-45% to-[#5b86c3] pt-[3px]">
          <Thumb n={8} title="Register Stack" tw={62} top={4.500} page="8" lines={[
            [8, 186, "If the stack pointer is at 0, then the stack is full and ‘FULL’ is set to"], [8, 187, "1. This is the condition when the SP was in location 63 and after"],
            [8, 187, "incrementing SP, the last item is stored at address 0. Once an item"], [8, 187, "is stored at address location 0, there are no more empty registers in"],
            [8.5, 26, "the stack."], [10, 188, "If an item is written in the stack, obviously the stack cannot be"], [8, 53, "empty (EMTY=0)."],
            [10, 67, "POP Micro operations", true], [9.5, 142, "DR ← M[SP], an item is read from the top of stack"], [10, 118, "SP ← SP - 1, stack pointer is decremented"], [9.5, 150, "If(SP ← 0 address) then (EMTY =1 ) and FULL = 0."],
          ]} />
          <Thumb n={9} title="Memory Stack" tw={64} top={4.500} page="9" lines={[
            [8, 187, "Stack can be implemented in the CPU by allotting a portion of the"], [8, 187, "computer memory to a stack operation and using a processor"],
            [8, 187, "register as a stack pointer. In this case, it is implemented in a"], [8.5, 124, "random access memory attached to the CPU."],
            [19.5, 186, "Portion of the computer memory is divided into three segment:", true], [9.5, 96, "(a) program, (b) data and (c) stack"],
            [19.5, 187, "The address of the next instruction in the program is stored in the"], [8.5, 187, "pointer Program Counter (PC). The Address Register (AR) points to"],
            [8, 187, "an array of the data. SP always holds the address of the item present"], [8.5, 61, "at the top of the stack."],
          ]} />
          <Thumb n={10} title="Memory Stack" tw={64} top={3.500} page="10" selected diagram lines={[
            [8, 179, "The three registers that are connected to the common bus are PC, AR, and SP."], [9, 122, "PC is used to read the instruction during fetch phase."],
            [8, 187, "An operand is read during execute phase using address register. An item is pushed"], [7, 115, "into or popped from the stack using stack pointer."],
          ]} />
          <Thumb n={11} title="Memory Stack" tw={64} top={4.500} page="11" lines={[
            [7, 188, "As discussed in previous slide, the SP points to an initial value ‘2001’. Here, the"], [7, 188, "stack grows with decreasing addresses. The first item is stored at address 2000,"], [7, 187, "the next item is stored at address 1999 and the last item is stored at address 1000."],
            [7, 58, "Push Micro operations", true], [8, 29, "SP ← SP -1"], [8.5, 34, "\u00a0M[SP] ← DR"], [8, 188, "To insert another item into the stack, the stack pointer is decremented by 1 so that"],
            [7, 188, "it points at the address of the next location/word. A word from DR is inserted into"], [7, 188, "the top of the stack using memory write operation. To delete an item from the"], [7, 14, "stack,"],
            [8, 57, "POP Micro operations", true], [8, 34, "DR ← M[SP]"], [8, 32, "SP ← SP +1"], [9, 188, "The top item is read into the DR and then the stack pointer is decremented to"], [7, 80, "point to the next item in the stack."],
          ]} />
          <Thumb n={12} title="Instruction Format" tw={84} top={13.500} lines={[
            [8, 188, "An instruction consists of a combination of operation codes and"], [8, 121, "operands that deal with the operation codes."],
          ]} />
        </div>
        <div className="flex w-[12px] flex-col items-center border-l border-[#8fb1e0] bg-linear-to-r from-[#5f83bd] to-[#86a6d6]">
          <svg width="8" height="5" viewBox="0 0 8 5" className="mt-[4px]"><path d="m4 0 4 5H0z" fill="#40629c" /></svg>
          <div className="mt-[239px] flex h-[99px] w-[11px] flex-col items-center justify-center gap-[2px] rounded-[2px] border border-[#7596c8] bg-linear-to-r from-[#eaf1fb] to-[#b9cce8]">
            <div className="h-px w-[7px] bg-[#6882ab]" /><div className="h-px w-[7px] bg-[#6882ab]" /><div className="h-px w-[7px] bg-[#6882ab]" />
          </div>
          <svg width="8" height="5" viewBox="0 0 8 5" className="mt-auto mb-[4px]"><path d="m4 5 4-5H0z" fill="#40629c" /></svg>
        </div>
      </div>
    </div>
  );
}

function Selection() {
  return (
    <svg width="467" height="352" viewBox="865 527 467 352" className="absolute top-[169px] left-[133.500px]">
      <g fill="none" stroke="#5f8aa8" strokeWidth="1.200">
        <rect x="873.500" y="555.500" width="451" height="316" />
        <path d="M1098.500 540v12" stroke="#8fb0c8" />
      </g>
      <g fill="#f0f8fd" stroke="#5f8aa8" strokeWidth="1.200">
        <circle cx="873.500" cy="555.500" r="3.600" /><circle cx="1324.500" cy="555.500" r="3.600" /><circle cx="873.500" cy="871" r="3.600" /><circle cx="1324.500" cy="871" r="3.600" />
        <rect x="1095.500" y="552.500" width="6" height="6" /><rect x="1095.500" y="868" width="6" height="6" /><rect x="870.500" y="710.500" width="6" height="6" /><rect x="1321.500" y="710.500" width="6" height="6" />
        <circle cx="1098.500" cy="535" r="3.700" fill="#86d93a" stroke="#6aa13e" />
      </g>
      <g stroke="#111" strokeWidth="1.300" fill="#111">
        <path d="M1204 676h4M1213 676h4M1210.500 669.500v4" />
        <path d="m1203 676 2.500-2.200v4.400zM1218 676l-2.500-2.200v4.400zM1210.500 668.500l2.200 2.700h-4.400z" strokeWidth=".5" />
        <path d="M1210.500 677v11.500l2.700-2.500 2 5 2-1-2-4.700h3.500z" fill="#fff" strokeWidth="1" />
      </g>
    </svg>
  );
}

function Workspace() {
  return (
    <div className="flex h-[746px] grow flex-col">
      <div className="flex h-[701px]">
        <div className="relative w-[1369px] bg-[linear-gradient(180deg,#a3bfe9_0%,#93b2e0_14%,#7f9fce_40%,#6288bd_66%,#5780b3_80%,#638cc7_100%)] pt-[76px] pl-[318px]">
          <svg width="160" height="30" viewBox="0 0 160 30" className="absolute top-0 left-0"><path d="M0 0h150C105 6 55 14 0 27z" fill="#bcd2f1" /></svg>
          <div className="relative flex h-[552px] w-[733px] flex-col bg-white shadow-[3px_3px_5px_rgba(20,40,80,.6)]">
            <div className="flex h-[67px] shrink-0 justify-between bg-[#ff3300] pr-[43px] pl-[8px]">
              <Fit w={230} className="font-['Liberation_Serif',serif] text-[37px] leading-[71px] font-bold text-black">Memory Stack</Fit>
              <div className="mt-[15px] flex h-[52px] w-[167px] bg-white pl-[11px]">
                <div className="mt-[14px] mr-[4px]">
                  <Fit w={87} className="h-[23px] font-['Open_Sans',sans-serif] text-[24px] leading-[27px] font-extrabold text-[#222]">CHITKARA</Fit>
                  <Fit w={86} className="h-[12px] font-['Liberation_Serif',serif] text-[16px] leading-[14px] text-[#222]">UNIVERSITY</Fit>
                </div>
                <LogoMark className="mt-[4px] h-[46px] w-[46px]" />
              </div>
            </div>
            <div className="pt-[14px] pl-[20px] font-['Liberation_Serif',serif] text-[20px] text-[#0c0c0c]">
              <Fit w={629} className="h-[29px] leading-[29px]">The three registers that are connected to the common bus are PC, AR, and SP.</Fit>
              <Fit w={427} className="h-[29.500px] leading-[29px]">PC is used to read the instruction during fetch phase.</Fit>
              <Fit w={668} className="h-[25px] leading-[29px]">An operand is read during execute phase using address register. An item is pushed</Fit>
              <Fit w={401} className="h-[29px] leading-[29px]">into or popped from the stack using stack pointer.</Fit>
            </div>
            <Diagram className="mt-[3px] ml-[142px] h-[316px] w-[451px] shrink-0" />
            <Fit w={13} className="mt-[1px] ml-[676px] text-[11px] leading-[17px] text-[#8b8b8b]">10</Fit>
            <div className="mt-auto h-[16px] shrink-0 bg-[#ff0606]" />
            <Selection />
          </div>
        </div>
        <div className="flex w-[14px] flex-col items-center border-l border-[#8fb4ea] bg-[#a9c6f2]">
          <div className="flex h-[660px] w-[12px] flex-col items-center bg-linear-to-r from-[#6a8cc0] to-[#87a5d2]">
            <svg width="7" height="4" viewBox="0 0 8 5" className="mt-[4px]"><path d="m4 0 4 5H0z" fill="#2f4f86" /></svg>
            <div className="mt-[265px] flex h-[29px] w-[12px] flex-col items-center justify-center gap-[2px] rounded-[2px] border border-[#7596c8] bg-linear-to-r from-[#eaf1fb] to-[#b9cce8]">
              <div className="h-px w-[6px] bg-[#6882ab]" /><div className="h-px w-[6px] bg-[#6882ab]" /><div className="h-px w-[6px] bg-[#6882ab]" />
            </div>
            <svg width="7" height="4" viewBox="0 0 8 5" className="mt-auto mb-[5px]"><path d="m4 5 4-5H0z" fill="#2f4f86" /></svg>
          </div>
          <svg width="8" height="22" viewBox="0 0 8 22" className="mt-[4px]" fill="#0b1733"><path d="m4 0 3.500 4h-7zM4 4l3.500 4h-7zM4 18l3.500-4h-7zM4 22l3.500-4h-7z" /></svg>
        </div>
      </div>
      <div className="h-[5px] shrink-0 border-t border-b border-t-[#d5e5fb] border-b-[#6f97cf] bg-[#adc9f3]" />
      <div className="flex h-[40px]">
        <div className="relative w-[1369px] bg-white pt-[4px] pl-[8px]">
          <Fit w={107} className="text-[13px] leading-[18px] text-[#222]">Click to add notes</Fit>
          <div className="absolute top-[14px] left-[417px] flex h-[26px] w-[297px] items-start border border-b-0 border-[#c9c9cc] bg-white pt-[4px] shadow-[0_0_3px_rgba(0,0,0,.25)]">
            <div className="mt-[8px] ml-[8px] h-[10px] w-[5px] border-x border-[#bbb]" />
            <Fit w={140} className="mt-[5px] ml-[9px] text-[11.500px] leading-[16px] text-[#333]">zoom.us is sharing your screen.</Fit>
            <div className="ml-[9px] flex h-[22px] w-[86px] justify-center rounded-t-[3px] bg-[#1f74e8] pt-[5px]"><Fit w={58} className="text-[11.500px] leading-[16px] font-semibold text-white">Stop sharing</Fit></div>
            <Fit w={21} className="mt-[5px] ml-[9px] text-[11.500px] leading-[16px] text-[#4f86dc]">Hide</Fit>
          </div>
        </div>
        <div className="flex w-[14px] flex-col items-center justify-between border-l border-[#c5d8f5] bg-linear-to-r from-[#86a4d2] to-[#7495c9] py-[5px]">
          <svg width="7" height="4" viewBox="0 0 8 5"><path d="m4 0 4 5H0z" fill="#5472a4" /></svg>
          <svg width="7" height="4" viewBox="0 0 8 5"><path d="m4 5 4-5H0z" fill="#5472a4" /></svg>
        </div>
      </div>
    </div>
  );
}

/* ---------- Meeting toolbar ---------- */

function Up({ className = "" }: { className?: string }) {
  return <svg width="9" height="6" viewBox="0 0 9 6" className={className}><path d="m1 5 3.500-3.500L8 5" fill="none" stroke="#a8a8a8" strokeWidth="1.600" /></svg>;
}

function Tool({ icon, label, w, green }: { icon: React.ReactNode; label: string; w: number; green?: boolean }) {
  return (
    <div className="flex h-[52px] flex-col items-center pt-[6px]">
      <div className="flex h-[23px] items-center">{icon}</div>
      <Fit w={w} className={`text-[13px] leading-[20px] ${green ? "text-[#23d959]" : "text-[#a8a8a8]"}`}>{label}</Fit>
    </div>
  );
}

function Toolbar() {
  return (
    <div className="flex h-[52px] shrink-0 bg-linear-to-b from-[#26282a] to-[#1d1e20] font-['DejaVu_Sans',sans-serif]">
      <div className="relative mt-[2px] ml-[12px] flex h-[48px] w-[78px] justify-center rounded-[6px] bg-[#404042]">
        <div className="-mt-[2px]"><Tool label="Unmute" w={48} icon={<svg width="24" height="24" viewBox="0 0 24 24"><rect x="8" y="1" width="8" height="14" rx="4" fill="#a8a8a8" /><path d="M5.500 11c0 9 13 9 13 0M12 18v4M8 22.500h8" stroke="#a8a8a8" strokeWidth="1.600" fill="none" /><path d="M.8 23.500 23.200.8" stroke="#f4565c" strokeWidth="1.500" /></svg>} /></div>
        <Up className="absolute top-[12px] right-[7px]" />
      </div>
      <div className="ml-[10px] w-[67px]"><Tool label="Start Video" w={67} icon={<svg width="26" height="24" viewBox="0 0 26 24"><rect x="1" y="5" width="17" height="14" rx="3" fill="#a8a8a8" /><path d="m19.500 9.500 5.500-4v13l-5.500-4z" fill="#a8a8a8" /><path d="M1.500 23.500 24.500.8" stroke="#222426" strokeWidth="3" /><path d="M1.500 23.500 24.500.8" stroke="#f4565c" strokeWidth="1.500" /></svg>} /></div>
      <Up className="mt-[14px] -ml-[6px]" />
      <div className="ml-[646px] w-[71px]">
        <Tool label="Participants" w={71} icon={
          <div className="ml-[74px] flex w-[102px] shrink-0 items-center">
            <svg width="24" height="19" viewBox="0 0 24 19" fill="#a8a8a8"><circle cx="8" cy="5" r="4.500" /><path d="M1 16c0-7 14-7 14 0 0 2-1 3-3 3H4c-2 0-3-1-3-3z" /><circle cx="17.500" cy="6.500" r="3.700" /><path d="M16 12c5-1.500 8 1 8 4.500 0 1.500-1 2.500-3 2.500h-5c1-2 1-5 0-7z" /></svg>
            <Fit w={15} className="ml-[4px] -mt-[2px] text-[13px] leading-[16px] text-[#a8a8a8]">57</Fit>
            <Up className="ml-[17px]" />
          </div>} />
      </div>
      <div className="ml-[54px] w-[28px]"><Tool label="Chat" w={28} icon={<svg width="20" height="19" viewBox="0 0 20 19"><path d="M3 0h14a3 3 0 0 1 3 3v8a3 3 0 0 1-3 3H9l-4.500 4.500V14H3a3 3 0 0 1-3-3V3a3 3 0 0 1 3-3z" fill="#a8a8a8" /></svg>} /></div>
      <div className="ml-[35px] w-[80px]"><Tool green label="Share Screen" w={80} icon={<svg width="24" height="18" viewBox="0 0 24 18" className="ml-[2px]"><rect width="24" height="18" rx="3" fill="#23d959" /><path d="M12 14V5M8 8.500 12 4.500l4 4" fill="none" stroke="#202224" strokeWidth="2" /></svg>} /></div>
      <div className="ml-[21px] w-[68px]"><Tool label="Raise Hand" w={68} icon={<svg width="17" height="21" viewBox="0 0 17 21"><g stroke="#b6b6bb" strokeWidth="2.300" strokeLinecap="round"><path d="M1.700 5.500v8M4.900 2.500v10M8 1.500v10M11.200 3v10" /><path d="M15.500 11.500 12 15" /></g><path d="M.6 10h11.800v4l2.500-2.500 1 .7L12 18c-2 3.500-11.400 4-11.400-4z" fill="#b6b6bb" /></svg>} /></div>
      <div className="mt-[12px] mr-[12px] ml-auto flex h-[28px] w-[78px] items-center justify-center rounded-[6px] bg-[#e02828]"><Fit w={39} className="text-[13px] leading-[18px] font-bold text-white">Leave</Fit></div>
    </div>
  );
}

export default function App() {
  return (
    <div className="relative flex h-[1080px] w-[1920px] overflow-hidden bg-[#1a1a1a]">
      <Dock />
      <div className="flex w-[1882px] flex-col">
        <div className="flex h-[32px] shrink-0 items-center bg-black pt-px pl-[8px]">
          <div className="flex gap-[11px]">
            <div className="h-[18px] w-[18px] rounded-full bg-[#f25056]" />
            <div className="h-[18px] w-[18px] rounded-full bg-[#39ea49]" />
            <div className="h-[18px] w-[18px] rounded-full bg-[#fac536]" />
          </div>
          <Fit w={127} className="ml-[839px] font-['Noto_Sans',sans-serif] text-[17px] leading-[28px] font-medium text-white">Zoom Meeting</Fit>
        </div>
        <Strip />
        <div className="flex h-[868px] shrink-0">
          <div className="relative z-20 flex h-[42px] w-[123px] shrink-0 items-center font-['DejaVu_Sans',sans-serif]">
            <div className="ml-[5px] flex h-[22px] w-[22px] shrink-0 items-center justify-center rounded-[4px] bg-[#131514]">
              <svg width="13" height="15" viewBox="0 0 13 15"><path d="M6.500.200C8.500 1.800 10.500 2.300 13 2.300c0 6.700-1.500 10-6.500 12.500C1.500 12.300 0 9 0 2.300c2.500 0 4.500-.5 6.500-2.100z" fill="#23d959" /><path d="m3.500 7 2.200 2.300 4-4.300" fill="none" stroke="#131514" strokeWidth="1.600" /></svg>
            </div>
            <div className="ml-[21px] flex h-[12px] w-[12px] shrink-0 items-center justify-center rounded-full bg-[#e3463c] shadow-[0_0_1px_1px_#5e2a28]"><div className="h-[4px] w-[5px] bg-[#f3dcda]" /></div>
            <Fit w={60} className="ml-[11px] text-[12px] leading-[16px] text-[#eeeeee]">Recording</Fit>
          </div>
          <div className="flex h-[868px] w-[1635px] flex-col overflow-hidden bg-[#a9c8f5] font-['Noto_Sans',sans-serif]">
            <Ribbon />
            <div className="flex h-[748px] border-t border-[#f0f8ff] pt-px">
              <SlidePane />
              <div className="w-[6px] shrink-0 border-x border-[#6f97cf] bg-[#b5d0f7]" />
              <Workspace />
            </div>
          </div>
        </div>
        <Toolbar />
      </div>
      {/* Sharing banner */}
      <div className="absolute top-[156px] left-[470px] z-30 flex h-[22px] w-[372px] font-['DejaVu_Sans',sans-serif]">
        <div className="flex w-[266px] items-center bg-[#23d959] pt-px pl-[10px]"><Fit w={245} className="text-[12px] leading-[18px] text-[#0d1a10]">You are viewing Anand Muni Mishra's screen</Fit></div>
        <div className="flex w-[106px] items-center rounded-br-[4px] bg-[#222426] pt-px pl-[10px]">
          <Fit w={71} className="text-[12px] leading-[18px] text-[#f4f4f4]">View Options</Fit>
          <svg width="9" height="6" viewBox="0 0 9 6" className="ml-[7px]"><path d="m1 1 3.500 3.500L8 1" fill="none" stroke="#f4f4f4" strokeWidth="1.600" /></svg>
        </div>
      </div>
      {/* Tooltip */}
      <div className="absolute top-[998px] left-[44px] z-30 flex h-[29px] w-[192px] items-center rounded-[5px] border border-[#e6dc58] bg-[#fffdd2] pb-px pl-[5px] font-['DejaVu_Sans',sans-serif]">
        <Fit w={180} className="text-[14.500px] leading-[20px] text-[#171717]">Unmute My Audio (Alt+A)</Fit>
      </div>
    </div>
  );
}
